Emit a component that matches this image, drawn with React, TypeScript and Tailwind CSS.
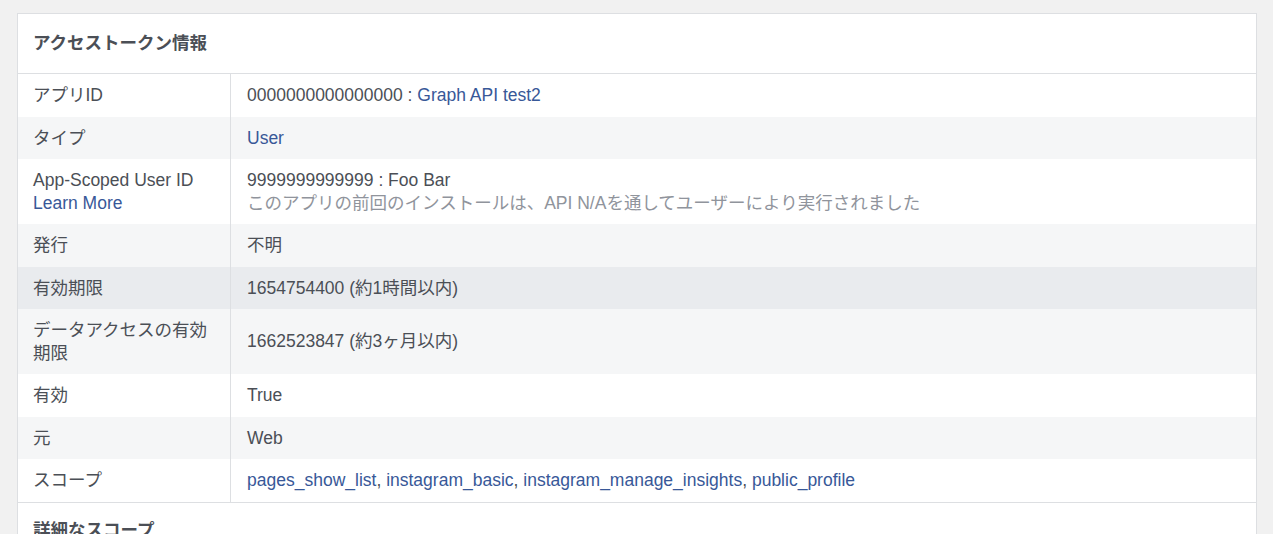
const rows: { label: React.ReactNode; value: React.ReactNode; bg: string }[] = [
  {
    label: "アプリID",
    value: (
      <>
        0000000000000000 : <span className="text-[#385898]">Graph API test2</span>
      </>
    ),
    bg: "bg-white",
  },
  { label: "タイプ", value: <span className="text-[#385898]">User</span>, bg: "bg-[#f5f6f7]" },
  {
    label: (
      <>
        <div>App-Scoped User ID</div>
        <div className="text-[#385898]">Learn More</div>
      </>
    ),
    value: (
      <>
        <div>9999999999999 : Foo Bar</div>
        <div className="text-[#90949c]">このアプリの前回のインストールは、API N/Aを通してユーザーにより実行されました</div>
      </>
    ),
    bg: "bg-white",
  },
  { label: "発行", value: "不明", bg: "bg-[#f5f6f7]" },
  { label: "有効期限", value: "1654754400 (約1時間以内)", bg: "bg-[#e9ebee]" },
  {
    label: "データアクセスの有効期限",
    value: "1662523847 (約3ヶ月以内)",
    bg: "bg-[#f5f6f7]",
  },
  { label: "有効", value: "True", bg: "bg-white" },
  { label: "元", value: "Web", bg: "bg-[#f5f6f7]" },
  {
    label: "スコープ",
    value: (
      <>
        <span className="text-[#385898]">pages_show_list</span>, <span className="text-[#385898]">instagram_basic</span>,{" "}
        <span className="text-[#385898]">instagram_manage_insights</span>, <span className="text-[#385898]">public_profile</span>
      </>
    ),
    bg: "bg-white",
  },
];

export default function App() {
  return (
    <main
      className="min-h-screen bg-[#f1f1f1] pt-[13px] pl-[17px] pr-[16px] text-[#4b4f56] text-[17.5px] leading-[22.5px]"
      style={{ fontFamily: '"Liberation Sans", Arial, "Noto Sans CJK JP", sans-serif' }}
    >
      <section className="bg-white border border-[#dddfe2]">
        <h2 className="h-[60px] flex items-center px-[15px] font-bold text-[17.5px] border-b border-[#dddfe2]">
          アクセストークン情報
        </h2>

        <div className="border-b border-[#dddfe2]">
          {rows.map((r, i) => (
            <div key={i} className={`flex ${r.bg}`}>
              <div className="w-[213px] shrink-0 border-r border-[#dddfe2] px-[15px] py-[10px]">{r.label}</div>
              <div className="flex-1 flex flex-col justify-center px-[16px] py-[10px]">
                <div>{r.value}</div>
              </div>
            </div>
          ))}
        </div>

        <h2 className="h-[56px] flex items-center px-[15px] font-bold text-[17.5px]">詳細なスコープ</h2>
      </section>
    </main>
  );
}
